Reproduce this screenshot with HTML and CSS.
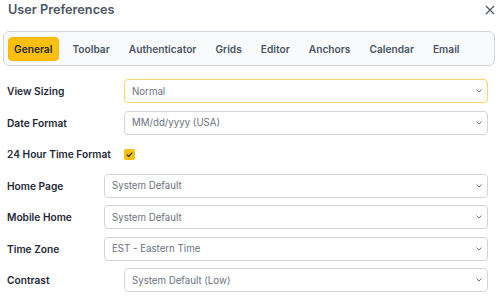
FILE: index.html
```html
<!DOCTYPE html>
<html>
<head>
<meta charset="utf-8">
<link rel="stylesheet" href="styles.css">
</head>
<body>
<div class="dialog">
  <div class="header">
    <div class="title">User Preferences</div>
    <div class="close">
      <svg width="10" height="10" viewBox="0 0 10 10"><path d="M1 1L9 9M9 1L1 9" stroke="#4b5563" stroke-width="1.2" fill="none"/></svg>
    </div>
  </div>
  <div class="tabs">
    <div class="tab active">General</div>
    <div class="tab">Toolbar</div>
    <div class="tab">Authenticator</div>
    <div class="tab">Grids</div>
    <div class="tab">Editor</div>
    <div class="tab">Anchors</div>
    <div class="tab">Calendar</div>
    <div class="tab">Email</div>
  </div>
  <div class="form">
    <div class="row wide">
      <div class="label">View Sizing</div>
      <div class="select focus"><span>Normal</span><svg class="chev" width="6" height="4" viewBox="0 0 6 4"><path d="M0.5 0.5L3 3L5.5 0.5" stroke="#6b7280" stroke-width="1" fill="none"/></svg></div>
    </div>
    <div class="row wide">
      <div class="label">Date Format</div>
      <div class="select"><span>MM/dd/yyyy (USA)</span><svg class="chev" width="6" height="4" viewBox="0 0 6 4"><path d="M0.5 0.5L3 3L5.5 0.5" stroke="#6b7280" stroke-width="1" fill="none"/></svg></div>
    </div>
    <div class="row wide">
      <div class="label">24 Hour Time Format</div>
      <div class="checkwrap"><div class="checkbox"><svg width="9" height="9" viewBox="0 0 9 9"><path d="M1.8 4.6L3.7 6.4L7.3 2.6" stroke="#1f2937" stroke-width="1.3" fill="none"/></svg></div></div>
    </div>
    <div class="row narrow">
      <div class="label">Home Page</div>
      <div class="select"><span>System Default</span><svg class="chev" width="6" height="4" viewBox="0 0 6 4"><path d="M0.5 0.5L3 3L5.5 0.5" stroke="#6b7280" stroke-width="1" fill="none"/></svg></div>
    </div>
    <div class="row narrow">
      <div class="label">Mobile Home</div>
      <div class="select"><span>System Default</span><svg class="chev" width="6" height="4" viewBox="0 0 6 4"><path d="M0.5 0.5L3 3L5.5 0.5" stroke="#6b7280" stroke-width="1" fill="none"/></svg></div>
    </div>
    <div class="row narrow">
      <div class="label">Time Zone</div>
      <div class="select"><span>EST - Eastern Time</span><svg class="chev" width="6" height="4" viewBox="0 0 6 4"><path d="M0.5 0.5L3 3L5.5 0.5" stroke="#6b7280" stroke-width="1" fill="none"/></svg></div>
    </div>
    <div class="row wide">
      <div class="label">Contrast</div>
      <div class="select"><span>System Default (Low)</span><svg class="chev" width="6" height="4" viewBox="0 0 6 4"><path d="M0.5 0.5L3 3L5.5 0.5" stroke="#6b7280" stroke-width="1" fill="none"/></svg></div>
    </div>
  </div>
</div>
</body>
</html>
```
FILE: styles.css
```css
* { box-sizing: border-box; }
html, body { margin: 0; padding: 0; background: #fff; }
body { font-family: Inter, "Noto Sans", sans-serif; color: #1f2937; }
.dialog { padding: 0 3px 0 3px; width: 500px; }
.header { display: flex; justify-content: space-between; align-items: center; height: 19px; padding: 1px 2px 0 5px; }
.title { font-size: 12.7px; font-weight: 600; color: #4b5563; line-height: 18px; }
.close { width: 10px; height: 10px; display: flex; }
.tabs { margin-top: 12px; height: 35px; border: 1px solid #d1d5db; border-radius: 6px; background: #f9fafb; display: flex; align-items: center; padding: 0 4px; gap: 7px; width: 492px; }
.tab { font-size: 10.2px; font-weight: 600; color: #4b5563; padding: 0 6px; height: 24px; line-height: 24px; border-radius: 4px; }
.tab.active { background: #fdc010; color: #1f2937; border: 1px solid #f5b800; line-height: 22px; padding: 0 6px 0 5px; }
.form { margin-top: 13px; padding-left: 4px; display: flex; flex-direction: column; gap: 7.5px; }
.row { display: flex; align-items: center; height: 24px; }
.row.wide .label { width: 117px; }
.row.narrow .label { width: 97px; }
.label { font-size: 10.2px; font-weight: 600; color: #1f2937; flex: none; }
.select { flex: 1; margin-right: 9px; height: 24px; border: 1px solid #d1d5db; border-radius: 4px; display: flex; align-items: center; justify-content: space-between; padding: 0 5px 0 7px; font-size: 9.7px; color: #6b7280; background: #fff; }
.select.focus { border-color: #fcd66a; }
.chev { flex: none; }
.checkwrap { flex: 1; display: flex; align-items: center; }
.checkbox { width: 11px; height: 11px; border-radius: 2px; background: #fdc010; display: flex; align-items: center; justify-content: center; }
```
